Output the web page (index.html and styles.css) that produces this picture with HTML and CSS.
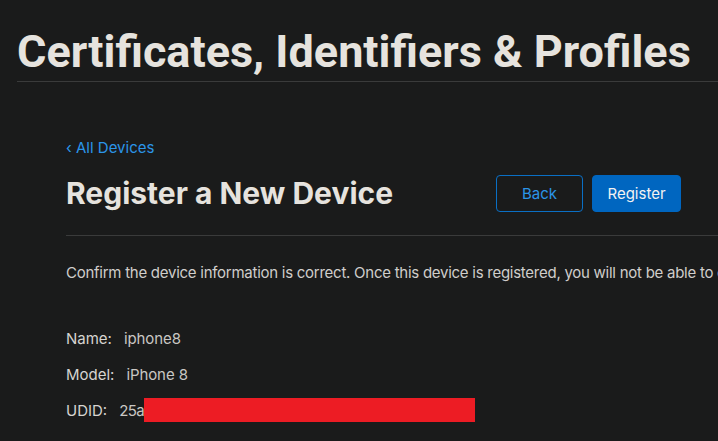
FILE: index.html
```html
<!DOCTYPE html>
<html>
<head>
<meta charset="utf-8">
<link rel="stylesheet" href="styles.css">
</head>
<body>
<header class="top">
  <h1 class="title">Certificates, Identifiers &amp; Profiles</h1>
</header>
<main class="content">
  <a class="back-link" href="#">‹ All Devices</a>
  <div class="head-row">
    <h2 class="heading">Register a New Device</h2>
    <div class="actions">
      <button class="btn btn-outline">Back</button>
      <button class="btn btn-primary">Register</button>
    </div>
  </div>
  <p class="intro">Confirm the device information is correct. Once this device is registered, you will not be able to edit the information.</p>
  <dl class="info">
    <div class="row"><dt>Name:</dt><dd>iphone8</dd></div>
    <div class="row"><dt>Model:</dt><dd>iPhone 8</dd></div>
    <div class="row"><dt>UDID:</dt><dd class="udid">25a<span class="redact"></span></dd></div>
  </dl>
</main>
</body>
</html>
```
FILE: styles.css
```css
html, body {
  margin: 0;
  padding: 0;
  background: #1a1b1b;
  overflow: hidden;
  width: 718px;
  height: 441px;
}
body {
  font-family: Inter, "Liberation Sans", sans-serif;
  color: #d6d4d0;
}
.top {
  padding: 24px 0 0 17px;
}
.title {
  margin: 0;
  font-family: Roboto, sans-serif;
  font-weight: 700;
  font-size: 45px;
  line-height: 56px;
  color: #e6e3de;
  white-space: nowrap;
  border-bottom: 1px solid #3a3b3b;
  padding-bottom: 1px;
}
.content {
  padding: 55px 0 0 66px;
}
.back-link {
  display: block;
  color: #2b95e8;
  text-decoration: none;
  font-size: 15px;
  line-height: 22px;
}
.head-row {
  display: flex;
  align-items: center;
  margin-top: 15px;
  height: 38px;
  padding-bottom: 23px;
  border-bottom: 1px solid #3a3b3b;
}
.heading {
  margin: 0;
  font-weight: 700;
  font-size: 30px;
  color: #e6e3de;
  width: 430px;
}
.actions {
  display: flex;
  gap: 9px;
}
.btn {
  font-family: Inter, sans-serif;
  font-size: 15px;
  height: 37px;
  border-radius: 4px;
  padding: 0;
}
.btn-outline {
  width: 87px;
  background: transparent;
  border: 1px solid #0a6fc4;
  color: #2b95e8;
}
.btn-primary {
  width: 89px;
  background: #0066c0;
  border: 1px solid #0066c0;
  color: #f2f2f2;
}
.intro {
  margin: 28px 0 0;
  font-size: 15px;
  line-height: 18px;
  letter-spacing: -0.26px;
  white-space: nowrap;
  overflow: hidden;
  color: #d0cecb;
}
.info {
  margin: 38px 0 0;
}
.row {
  display: flex;
  height: 36px;
  align-items: center;
  font-size: 15px;
}
.row dt {
  color: #d6d4d0;
  margin-right: 12px;
}
.row dd {
  margin: 0;
  color: #c9c7c3;
  display: flex;
  align-items: center;
  letter-spacing: -0.1px;
}
.row .udid {
  letter-spacing: -0.6px;
}
.redact {
  display: inline-block;
  width: 331px;
  height: 24px;
  background: #ed1c24;
}
```
